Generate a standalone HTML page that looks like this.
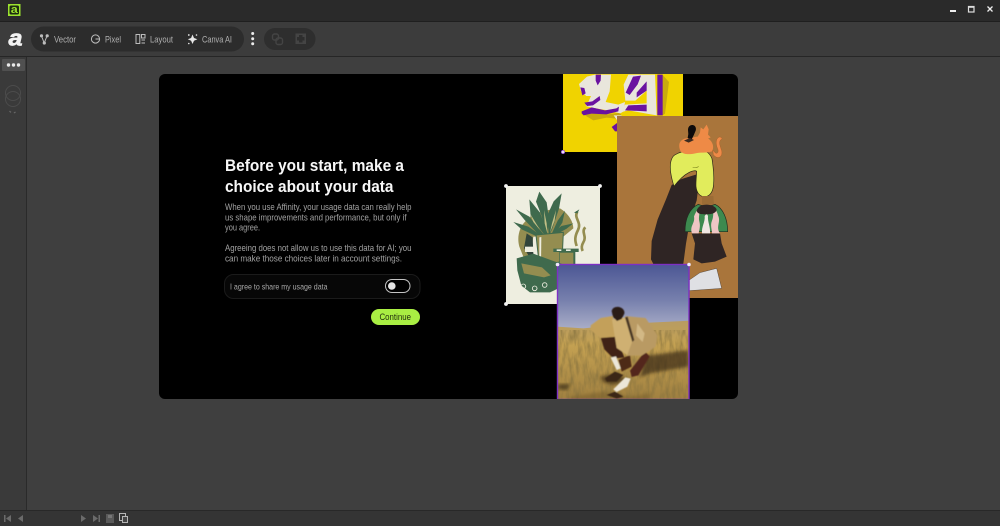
<!DOCTYPE html>
<html><head><meta charset="utf-8"><style>
html,body{margin:0;padding:0;background:#3f3f3f;width:1000px;height:526px;overflow:hidden}
svg{display:block}
text{font-family:"Liberation Sans",sans-serif}
</style></head><body>
<svg width="1000" height="526" viewBox="0 0 1000 526" xmlns="http://www.w3.org/2000/svg">
<defs>
<linearGradient id="sky" x1="0" y1="0" x2="0" y2="1"><stop offset="0" stop-color="#4b5694"/><stop offset=".55" stop-color="#7780ad"/><stop offset="1" stop-color="#abafc8"/></linearGradient>
<linearGradient id="field" x1="0" y1="0" x2="0" y2="1"><stop offset="0" stop-color="#b89c62"/><stop offset=".3" stop-color="#c4a152"/><stop offset="1" stop-color="#a08040"/></linearGradient>
<filter id="grass" x="0" y="0" width="100%" height="100%"><feTurbulence type="fractalNoise" baseFrequency=".3 .07" numOctaves="3" seed="7"/><feColorMatrix values="0 0 0 0 .24 0 0 0 0 .17 0 0 0 0 .05 2 0 0 0 -.72"/></filter>
<filter id="b1" x="-10%" y="-10%" width="120%" height="120%"><feGaussianBlur stdDeviation="1.200"/></filter>
<filter id="b2" x="-20%" y="-20%" width="140%" height="140%"><feGaussianBlur stdDeviation="5"/></filter>
<clipPath id="yc"><rect x="563" y="74" width="120" height="78"/></clipPath>
<clipPath id="bc"><rect x="617" y="116" width="121" height="182"/></clipPath>
<clipPath id="cc"><rect x="506" y="186" width="94" height="118"/></clipPath>
<clipPath id="pc"><rect x="557" y="264" width="132" height="135"/></clipPath>
<clipPath id="card"><rect x="159" y="74" width="579" height="325" rx="6"/></clipPath>
</defs>

<!-- app chrome -->
<rect width="1000" height="526" fill="#3f3f3f"/>
<rect width="1000" height="21" fill="#2a2a2a"/>
<rect y="21" width="1000" height="1" fill="#1f1f1f"/>
<rect y="22" width="1000" height="34" fill="#3c3c3c"/>
<rect y="56" width="1000" height="1" fill="#262626"/>
<rect y="57" width="26" height="454" fill="#3a3a3a"/>
<rect x="26" y="57" width="1" height="454" fill="#2a2a2a"/>
<rect y="511" width="1000" height="15" fill="#343434"/>
<rect y="510" width="1000" height="1" fill="#282828"/>

<!-- title icon -->
<rect x="8" y="4" width="12.500" height="12" fill="#9be22f"/>
<rect x="9.500" y="5.500" width="9.500" height="9" rx="1.500" fill="#1c2a10"/>
<text x="10.800" y="13.200" font-size="11" font-weight="700" fill="#9be22f" textLength="7" lengthAdjust="spacingAndGlyphs">a</text>

<!-- window controls -->
<rect x="950" y="10" width="6" height="2" fill="#eee"/>
<rect x="968.500" y="6.500" width="5.500" height="5.500" fill="none" stroke="#ddd" stroke-width="1.200"/><rect x="968" y="6" width="6.500" height="1.800" fill="#ddd"/>
<path d="M987.500 6.500l5 5M992.500 6.500l-5 5" stroke="#eee" stroke-width="1.300"/>

<!-- toolbar -->
<text x="8.500" y="45.500" font-size="22" font-weight="700" font-style="italic" fill="#f2f2f2" stroke="#f2f2f2" stroke-width=".7" textLength="14" lengthAdjust="spacingAndGlyphs">a</text>
<rect x="31" y="26.500" width="213" height="25" rx="12.500" fill="#2c2c2c"/>
<g fill="none" stroke="#bdbdbd" stroke-width="1">
<path d="M41.500 36l2.700 7 2.800-7"/><circle cx="41.500" cy="35.800" r="1.100" fill="#bdbdbd"/><circle cx="47.200" cy="35.800" r="1.100" fill="#bdbdbd"/><circle cx="44.300" cy="43" r="1.100" fill="#bdbdbd"/>
<circle cx="95.500" cy="39" r="4.100"/><path d="M95.500 39h4"/>
<rect x="136" y="34.500" width="3.800" height="9"/><rect x="141.500" y="34.500" width="3.500" height="3.500"/><path d="M141.500 40h3.500M141.500 43h3.500"/>
</g>
<path d="M192.500 34.500l1.500 3.500 3.400 1.300-3.400 1.400-1.500 3.300-1.400-3.300-3.300-1.400 3.300-1.300z" fill="#e8e8e8"/><circle cx="188.800" cy="35" r=".9" fill="#e8e8e8"/><circle cx="196.500" cy="35" r=".8" fill="#e8e8e8"/><circle cx="188.800" cy="43.500" r=".8" fill="#e8e8e8"/>
<g font-size="9.200" fill="#b0b0b0">
<text x="54" y="42.300" textLength="22" lengthAdjust="spacingAndGlyphs">Vector</text>
<text x="105" y="42.300" textLength="16" lengthAdjust="spacingAndGlyphs">Pixel</text>
<text x="150" y="42.300" textLength="23" lengthAdjust="spacingAndGlyphs">Layout</text>
<text x="202" y="42.300" textLength="30" lengthAdjust="spacingAndGlyphs">Canva AI</text>
</g>
<circle cx="252.700" cy="33.500" r="1.500" fill="#eee"/><circle cx="252.700" cy="38.800" r="1.500" fill="#eee"/><circle cx="252.700" cy="43.800" r="1.500" fill="#eee"/>
<rect x="264" y="28" width="51.500" height="22" rx="11" fill="#2e2e2e"/>
<g fill="none" stroke="#444" stroke-width="1.400"><rect x="272.500" y="34" width="6" height="6" rx="2"/><rect x="276" y="38" width="6.500" height="6.500" rx="2"/></g>
<g fill="#444"><rect x="295.500" y="33.500" width="3.500" height="3.500"/><rect x="302.500" y="33.500" width="3.500" height="3.500"/><rect x="295.500" y="40.500" width="3.500" height="3.500"/><rect x="302.500" y="40.500" width="3.500" height="3.500"/><rect x="299" y="33.500" width="3.500" height="1.500"/><rect x="299" y="42.500" width="3.500" height="1.500"/><rect x="295.500" y="37" width="1.500" height="3.500"/><rect x="304.500" y="37" width="1.500" height="3.500"/></g>

<!-- left panel -->
<rect x="2" y="59" width="23" height="12" rx="1" fill="#505050"/>
<circle cx="8.500" cy="65" r="1.700" fill="#e8e8e8"/><circle cx="13.500" cy="65" r="1.700" fill="#e8e8e8"/><circle cx="18.500" cy="65" r="1.700" fill="#e8e8e8"/>
<g fill="none" stroke="#4c4c4c" stroke-width="1"><circle cx="13" cy="93" r="7.500"/><circle cx="13" cy="99" r="7.500"/></g>
<path d="M9.500 111q3.500 4 7 0" fill="none" stroke="#666" stroke-width="1.300" stroke-dasharray="2 3"/>

<!-- bottom bar -->
<g fill="#6b6b6b">
<rect x="4" y="515" width="1.500" height="7"/><path d="M11 515v7l-5-3.500z"/>
<path d="M23 515v7l-5-3.500z"/>
<path d="M81 515v7l5-3.500z"/>
<path d="M93 515v7l5-3.500z"/><rect x="98.500" y="515" width="1.500" height="7"/>
<rect x="106" y="514" width="8" height="9" fill="#5a5a5a"/><rect x="108" y="515" width="4" height="3" fill="#777"/>
</g>
<rect x="119.500" y="513.500" width="6" height="7" fill="none" stroke="#b5b5b5"/><rect x="122.500" y="516.500" width="5" height="6" fill="#444" stroke="#b5b5b5"/>

<!-- card -->
<rect x="159" y="74" width="579" height="325" rx="6" fill="#000"/>

<g clip-path="url(#card)">
<!-- yellow poster -->
<g clip-path="url(#yc)">
<rect x="563" y="74" width="120" height="78" fill="#f0d300"/>
<g transform="translate(575 72) scale(.33333)">
<path d="M262 8l20 22-12 95-8 6zM30 130l30-8 40 5 35-5 10 20-50-5-40 8z" fill="#c9ab0e"/>
<path d="M12 36l24-22 24-6h48l-4 50-12 32 38 8 20-8-4 28-10 6-44-10-36-6-24-6 8-12 8-18-14 0-16-14z" fill="#e9e6dc"/>
<path d="M62 8h16l-1 18-9 14-6-14zM16 46l12 2 4 16-10 6zM28 92l24-4 22-16 2 12-22 16-18 2z" fill="#6a12a0"/>
<path d="M20 118l30-12 40 9 34-6 8-5-2 14-36 9-44-2-24 5-6-6z" fill="#6a12a0"/>
<path d="M160 8h80l5 122-30-5-55-10-20 5 10-22 65-4v-38l-34 30-30 0-5-48 14-30z" fill="#e9e6dc"/>
<path d="M152 62l22-48 24-3-10 26-24 32zM185 62l30-34v28l-30 20zM160 100l55-2v20l-65-3z" fill="#6a12a0"/>
<path d="M247 8h16v122h-16z" fill="#6a12a0"/>
<path d="M110 165l20-15v28h-10z" fill="#6a12a0"/>
<path d="M130 150l10-20-24 0z" fill="#e9e6dc"/>
</g>
</g>
<circle cx="563" cy="152" r="1.700" fill="#e8dcf5" stroke="#8b3fd0" stroke-width=".6"/>

<!-- brown poster -->
<g clip-path="url(#bc)">
<rect x="617" y="116" width="121" height="182" fill="#a9753b"/>
<g transform="translate(550 260) scale(.33333)">
<path d="M418 60l32-22 50-13 15 60-97 7z" fill="#dfe0e4" stroke="#2a2320" stroke-width="1"/>
</g>
<g transform="translate(660 120) scale(.33333)">
<path d="M95 340h85l5 30 15 40-35 15-40 5-25-12 5-48z" fill="#2f2524"/>
<path d="M35 195l30-18 45-14 6 30-6 48-20 60-12 70-8 60-15 12-30 5-42-10-10-20 2-55 18-65 25-60z" fill="#2f2524"/>
<path d="M44 105c20-12 44-15 64-14 22-4 40 4 48 25 4 26 8 55 4 84-3 20-14 30-26 30-15 0-24-12-26-30-1-16 2-36 2-46-3-3-12-2-22 3-18 9-32 24-46 42-8-25-14-50-10-72 2-10 6-18 12-22z" fill="#e1ec5c" stroke="#2a2418" stroke-width="2"/>
<path d="M98 142c8 2 14 1 18-3" fill="none" stroke="#8e9528" stroke-width="2"/>
<path d="M126 228h34l2 26h-36z" fill="#9b6c36"/>
<path d="M75 335c0-40 14-70 40-82 10 6 40 6 50 0 25 12 38 45 38 82z" fill="#3d8a4f" stroke="#1f2b1f" stroke-width="2"/>
<path d="M96 340c-8-22 10-30 6-50 4-12 12-24 14-26 6 12-2 28 2 40 4 14 0 25-2 36zM180 340c-14-20 4-34-6-54-2-10-8-18-12-24-4 14 0 26-6 40-6 14 0 26 0 38z" fill="#efc6c4"/>
<path d="M126 340c-2-20 10-34 8-52l6-8 4 8c-2 16 8 34 6 52z" fill="#f1e7e3"/>
<path d="M110 272c4-14 18-18 30-18s28 5 30 15c-2 12-18 14-30 14s-28 1-30-11z" fill="#2f2524"/>
<path d="M160 104c8 10 18 12 24 2 5-10-2-20-4-30-2-6-2-14 4-18 6 0-2-10-8-6-10 6-8 22-4 32 3 6 4 14-2 16-5 0-8-6-12-10z" fill="#ee8a48" stroke="#a65a24" stroke-width="1.200"/>
<path d="M58 72c4-14 20-20 32-16 20-10 48-8 60 4 10 10 12 24 6 34-20 6-35 2-50 6-18 4-36 4-44-6-4-8-5-14-4-22z" fill="#ee8a46"/>
<path d="M112 52l8-14 2-16 8 6 10-14 6 14-2 16 8 8-20 10z" fill="#ee8a46"/>
<path d="M84 30c0-10 6-15 13-15s13 7 10 17l-6 14-6 12-12-4 2-12z" fill="#0c0b0b"/>
<path d="M72 62l18-8 12 6-16 8z" fill="#3b2a20"/>
</g>
</g>

<!-- cream poster -->
<g clip-path="url(#cc)">
<rect x="506" y="186" width="94" height="118" fill="#eeeee0"/>
<g transform="translate(510 190) scale(.33333)">
<path d="M28 170c-8-30 0-60 22-80 20-20 50-30 100-35 25 15 40 40 40 60l-30 25H70l-10 70-20-10z" fill="#948d50"/>
<path d="M50 130l18 12 2 50-10 12-18-30z" fill="#31443a"/>
<rect x="45" y="170" width="28" height="16" fill="#eeeee0"/>
<g fill="#3f6a4d">
<path d="M88 5l22 32 8 58-10 40-14-60-16-40z"/>
<path d="M155 10l-8 46-20 60-10 22-6-60 20-44z"/>
<path d="M58 28l32 40 24 66-8 4-44-58z"/>
<path d="M18 58l40 22 42 52-10 6-46-48z"/>
<path d="M10 96l45 14 40 28-4 6-56-26z"/>
<path d="M190 100l-36 8-34 28 8 4 42-24z"/>
<path d="M165 62l-22 30-20 44 8 2 26-40z"/>
</g>
<path d="M102 60l8 40 2 30-8-30zM138 60l-12 40-6 28 14-36zM60 70l30 50-20-24z" fill="#c2bf86"/>
<path d="M78 135l82-8-4 88-68 12z" fill="#948d50" stroke="#3f6a4d" stroke-width="3"/>
<path d="M88 142l6-1-1 85-5 0z" fill="#eeeee0"/>
<path d="M202 65c-12 20 14 30 2 55-10 20-10 30-4 48M226 112c-14 14 6 26-6 45-6 10-6 18-2 26" fill="none" stroke="#948d50" stroke-width="8"/>
<path d="M192 68l16-10-6 12z" fill="#3f6a4d"/>
<path d="M130 176h76v10h-10v45h-48v-45h-18z" fill="#3f6a4d"/>
<path d="M150 188h40v50h-40z" fill="#948d50"/>
<path d="M140 178h14v5h-14zM168 178h14v5h-14z" fill="#eeeee0"/>
<path d="M20 205l50-14 60 22 30 10-10 70-30 14-60 0-26-20-12-46z" fill="#3f6a4d"/>
<path d="M34 220l62 12 26 24-20 6-60-12z" fill="#948d50"/>
<path d="M40 282a7 7 0 1 0 .1 0M74 288a7 7 0 1 0 .1 0M104 278a7 7 0 1 0 .1 0" fill="none" stroke="#eeeee0" stroke-width="2.500"/>
</g>
</g>
<g fill="#f4f4f4"><circle cx="506" cy="186" r="1.900"/><circle cx="600" cy="186" r="1.900"/><circle cx="506" cy="304" r="1.900"/></g>

<!-- photo -->
<g clip-path="url(#pc)">
<rect x="557" y="264" width="132" height="66" fill="url(#sky)"/>
<g transform="translate(550 260) scale(.33333)">
<path d="M20 200l80 5 30-3 170-14 120-6v240H20z" fill="url(#field)"/>
</g>
<rect x="557" y="330" width="132" height="69" filter="url(#grass)" opacity=".75"/>
<g transform="translate(550 260) scale(.33333)">
<path d="M285 288l130-18v50l-115 20-30 12z" fill="#3b2b12" filter="url(#b2)" opacity=".7"/>
<path d="M25 372h36l-10 18-26-2z" fill="#3a2d15" filter="url(#b2)" opacity=".7"/>
<path d="M150 350l50-10 30 20-40 15-30-8z" fill="#3a2a12" filter="url(#b2)" opacity=".7"/>
<path d="M60 410l100-15 80 15 60-10 0 20H60z" fill="#6f5627" filter="url(#b2)" opacity=".45"/>
<g filter="url(#b1)">
<path d="M150 225l45-5 28 72-32 4-28-28z" fill="#3f2016"/>
<path d="M240 332l45-58 14 16-34 56-20 5z" fill="#52281a"/>
<path d="M205 300l35-15 5 35-30 15z" fill="#4e2a18"/>
<path d="M182 293l16-4 14 36-12 5z" fill="#ece6d8"/>
<path d="M165 355l30-20 25 10-20 20-30 0z" fill="#3a2814"/>
<path d="M190 388l36-36 16 4-10 24-32 16z" fill="#ece6d8"/>
<path d="M170 405l25-10 25 15-20 6z" fill="#3a2814"/>
<path d="M122 196l30-22 36-6 16 62-54 4-28-24z" fill="#c3a05a"/>
<path d="M186 178l40-6 26 72-16 44-36-24z" fill="#cfb072"/>
<path d="M225 168l62 6 35 52-5 34-42 27-44 0 18-48z" fill="#b99a64"/>
<path d="M262 190l22 30-6 26-20-20z" fill="#d2b885"/>
<path d="M225 172l8-2 20 70-6 6z" fill="#4a3828"/>
<path d="M185 153c2-10 12-14 22-12s18 10 16 20l-8 16-14 6-12-12z" fill="#2a1a16"/>
</g>
</g>
</g>
<rect x="557.500" y="264.500" width="131.500" height="135" fill="none" stroke="#7d30c4" stroke-width="1.400"/>
<g fill="#f0e8fa"><circle cx="557.500" cy="264.500" r="1.800"/><circle cx="689" cy="264.500" r="1.800"/></g>
</g>

<!-- card text -->
<g font-weight="700" font-size="16.500" fill="#f7f7f7">
<text x="225" y="171" textLength="179" lengthAdjust="spacingAndGlyphs">Before you start, make a</text>
<text x="225" y="192" textLength="168.500" lengthAdjust="spacingAndGlyphs">choice about your data</text>
</g>
<g font-size="9.200" fill="#a2a2a2">
<text x="225" y="210" textLength="186.500" lengthAdjust="spacingAndGlyphs">When you use Affinity, your usage data can really help</text>
<text x="225" y="220.300" textLength="181.500" lengthAdjust="spacingAndGlyphs">us shape improvements and performance, but only if</text>
<text x="225" y="230.500" textLength="35" lengthAdjust="spacingAndGlyphs">you agree.</text>
<text x="225" y="251" textLength="186.500" lengthAdjust="spacingAndGlyphs">Agreeing does not allow us to use this data for AI; you</text>
<text x="225" y="261.500" textLength="177" lengthAdjust="spacingAndGlyphs">can make those choices later in account settings.</text>
</g>
<rect x="224.500" y="274.500" width="195.500" height="24" rx="9" fill="#070707" stroke="#1b1b1b"/>
<text x="230" y="289.500" font-size="8.600" fill="#a8a8a8" textLength="97.500" lengthAdjust="spacingAndGlyphs">I agree to share my usage data</text>
<rect x="385.500" y="279.500" width="24.500" height="13" rx="6.500" fill="#000" stroke="#c4c4c4" stroke-width="1"/>
<circle cx="391.800" cy="286" r="3.800" fill="#e4e4e4"/>
<rect x="371" y="309" width="49" height="16" rx="8" fill="#a9ee43"/>
<text x="379.500" y="320.200" font-size="9" fill="#24310f" textLength="31.500" lengthAdjust="spacingAndGlyphs">Continue</text>
</svg>
</body></html>
